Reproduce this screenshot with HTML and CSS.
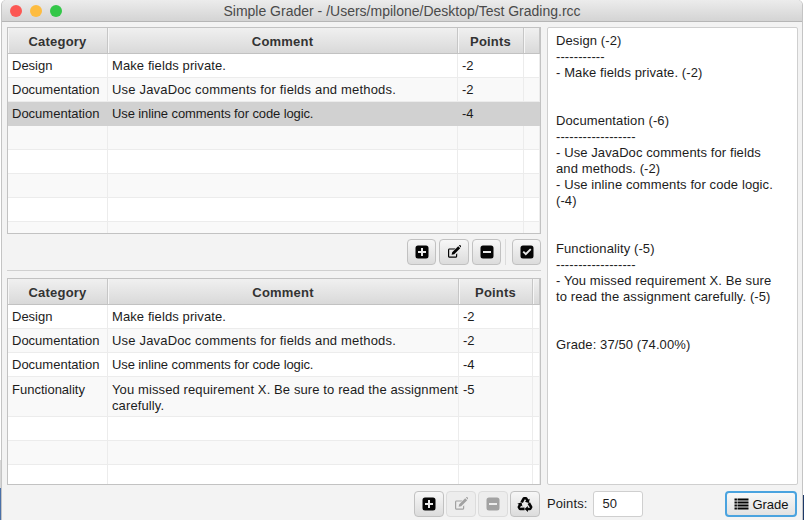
FILE: index.html
```html
<!DOCTYPE html>
<html lang="en">
<head>
<meta charset="utf-8">
<title>Simple Grader</title>
<link rel="stylesheet" href="styles.css">
</head>
<body>
<svg class="defs" width="0" height="0" aria-hidden="true">
  <defs>
    <symbol id="i-plus" viewBox="0 0 14 14"><path fill-rule="evenodd" d="M3 0.5h8a2.5 2.5 0 0 1 2.5 2.5v8a2.5 2.5 0 0 1-2.5 2.5H3A2.5 2.5 0 0 1 .5 11V3A2.5 2.5 0 0 1 3 .5zM6 3v3H3v2h3v3h2V8h3V6H8V3z"/></symbol>
    <symbol id="i-minus" viewBox="0 0 14 14"><path fill-rule="evenodd" d="M3 0.5h8a2.5 2.5 0 0 1 2.5 2.5v8a2.5 2.5 0 0 1-2.5 2.5H3A2.5 2.5 0 0 1 .5 11V3A2.5 2.5 0 0 1 3 .5zM3 6v2h8V6z"/></symbol>
    <symbol id="i-check" viewBox="0 0 14 14"><path fill-rule="evenodd" d="M3 0.5h8a2.5 2.5 0 0 1 2.5 2.5v8a2.5 2.5 0 0 1-2.5 2.5H3A2.5 2.5 0 0 1 .5 11V3A2.5 2.5 0 0 1 3 .5zM2.6 7.2l3.2 3.2 5.6-5.6-1.3-1.3-4.3 4.3-1.9-1.9z"/></symbol>
    <symbol id="i-edit" viewBox="0 0 14 14"><path d="M10.2 8.2v3.1c0 .9-.6 1.5-1.5 1.5H2.5c-.9 0-1.5-.6-1.5-1.5V4.9c0-.9.6-1.5 1.5-1.5h6l-1.2 1.2H2.6c-.3 0-.4.1-.4.4v6.2c0 .3.1.4.4.4h6c.3 0 .4-.1.4-.4V9.4z"/><path d="M11.2 1.2l2 2-6 6-2.6.6.6-2.6zM11.9.5l.7-.4c.2-.1.4-.1.6 0l1 1c.1.2.1.4 0 .6l-.4.7z"/></symbol>
    <symbol id="i-recycle" viewBox="0 0 16 16">
      <path id="rc-arm" d="M3.4 5.7 5.7 1.8Q6.2 1 7 1H9Q9.8 1 10.3 1.8L11.3 3.5 12.7 2.7 11.9 7 7.7 5.7 9.1 4.9 8 3 5.9 7Z"/>
      <use href="#rc-arm" transform="rotate(120 8 8.8)"/>
      <use href="#rc-arm" transform="rotate(240 8 8.8)"/>
    </symbol>
    <symbol id="i-list" viewBox="0 0 14 12"><path d="M0 .5h2.4v2H0zM3 .5h11v2H3zM0 3.5h2.4v2H0zM3 3.5h11v2H3zM0 6.5h2.4v2H0zM3 6.5h11v2H3zM0 9.5h2.4v2H0zM3 9.5h11v2H3z"/></symbol>
  </defs>
</svg>
<div class="window">
  <header class="titlebar">
    <div class="lights"><span class="light red"></span><span class="light yellow"></span><span class="light green"></span></div>
    <div class="title">Simple Grader - /Users/mpilone/Desktop/Test Grading.rcc</div>
  </header>
  <div class="content">
    <main class="left">
      <section class="table table-a">
        <div class="row head"><div class="th">Category</div><div class="th">Comment</div><div class="th">Points</div><div class="th"></div></div>
        <div class="row"><div>Design</div><div class="tight">Make fields private.</div><div>-2</div><div></div></div>
        <div class="row alt"><div>Documentation</div><div class="wide">Use JavaDoc comments for fields and methods.</div><div>-2</div><div></div></div>
        <div class="row selected"><div>Documentation</div><div class="narrow">Use inline comments for code logic.</div><div>-4</div><div></div></div>
        <div class="row alt"><div></div><div></div><div></div><div></div></div>
        <div class="row"><div></div><div></div><div></div><div></div></div>
        <div class="row alt"><div></div><div></div><div></div><div></div></div>
        <div class="row"><div></div><div></div><div></div><div></div></div>
        <div class="row alt"><div></div><div></div><div></div><div></div></div>
      </section>
      <div class="toolbar">
        <button class="btn w29"><svg class="ic"><use href="#i-plus"/></svg></button>
        <button class="btn w30"><svg class="ic"><use href="#i-edit"/></svg></button>
        <button class="btn w29"><svg class="ic"><use href="#i-minus"/></svg></button>
        <span class="vsep"></span>
        <button class="btn w29"><svg class="ic"><use href="#i-check"/></svg></button>
      </div>
      <hr class="divider">
      <section class="table table-b">
        <div class="row head"><div class="th">Category</div><div class="th">Comment</div><div class="th">Points</div><div class="th"></div></div>
        <div class="row"><div>Design</div><div class="tight">Make fields private.</div><div>-2</div><div></div></div>
        <div class="row alt"><div>Documentation</div><div class="wide">Use JavaDoc comments for fields and methods.</div><div>-2</div><div></div></div>
        <div class="row"><div>Documentation</div><div class="narrow">Use inline comments for code logic.</div><div>-4</div><div></div></div>
        <div class="row alt tall"><div>Functionality</div><div class="mid">You missed requirement X. Be sure to read the assignment<br>carefully.</div><div>-5</div><div></div></div>
        <div class="row"><div></div><div></div><div></div><div></div></div>
        <div class="row alt"><div></div><div></div><div></div><div></div></div>
        <div class="row"><div></div><div></div><div></div><div></div></div>
      </section>
    </main>
    <aside class="report">Design (-2)
-----------
- Make fields private. (-2)


Documentation (-6)
------------------
- Use JavaDoc comments for fields and methods. (-2)
- Use inline comments for code logic. (-4)


Functionality (-5)
------------------
- You missed requirement X. Be sure to read the assignment carefully. (-5)


Grade: 37/50 (74.00%)</aside>
  </div>
  <footer class="bottom">
    <button class="btn w30"><svg class="ic"><use href="#i-plus"/></svg></button>
    <button class="btn w30 off"><svg class="ic"><use href="#i-edit"/></svg></button>
    <button class="btn w30 off"><svg class="ic"><use href="#i-minus"/></svg></button>
    <button class="btn w30"><svg class="ic big"><use href="#i-recycle"/></svg></button>
    <label class="points">Points:</label>
    <div class="input">50</div>
    <button class="btn grade"><svg class="ic list"><use href="#i-list"/></svg>Grade</button>
  </footer>
</div>
</body>
</html>
```

FILE: styles.css
```css
* { box-sizing: border-box; }
html, body { margin: 0; height: 100%; }
body {
  width: 804px;
  height: 520px;
  overflow: hidden;
  background:
    linear-gradient(#ffffff 460px, #d6d6d6 460px, #d6d6d6 488px, #4a70a8 488px) left / 2px 100% no-repeat,
    linear-gradient(#ffffff 495px, #1c3868 495px) right / 2px 100% no-repeat,
    #fff;
  font-family: "Liberation Sans", Arial, sans-serif;
  font-size: 13px;
  color: #1c1c1c;
}
.defs { position: absolute; }
.window {
  margin-left: 2px;
  width: 800px;
  height: 520px;
  background: #f3f3f3;
  border-radius: 5px 5px 0 0;
  box-shadow: -1px 0 0 #c4c4c4, 1px 0 0 #c4c4c4;
  display: flex;
  flex-direction: column;
}
.titlebar {
  position: relative;
  height: 22px;
  flex: none;
  display: flex;
  justify-content: center;
  align-items: center;
  padding-top: 1px;
  background: linear-gradient(#ececec, #d4d4d4);
  border-bottom: 1px solid #b6b6b6;
  border-radius: 5px 5px 0 0;
}
.lights {
  position: absolute;
  left: 8px;
  top: 5px;
  display: flex;
  gap: 8px;
}
.light { width: 12px; height: 12px; border-radius: 50%; }
.red { background: #fc5753; }
.yellow { background: #fdbc40; }
.green { background: #33c748; }
.title { color: #4a4a4a; font-size: 14px; }
.content {
  flex: none;
  height: 458px;
  margin-top: 5px;
  padding-left: 5px;
  display: flex;
  gap: 6px;
}
.left { width: 534px; display: flex; flex-direction: column; }
.table {
  flex: none;
  height: 207px;
  overflow: hidden;
  background: #fff;
  border: 1px solid #c2c2c2;
}
.row {
  display: grid;
  height: 24px;
  align-items: stretch;
  line-height: 23px;
  border-bottom: 1px solid #ececec;
  background: #fff;
}
.table-a .row { grid-template-columns: 100px 350px 66px 1fr; }
.table-b .row { grid-template-columns: 100px 351px 74px 1fr; }
.row > div { padding-left: 4px; border-right: 1px solid #ececec; white-space: nowrap; overflow: hidden; }
.row > .wide { letter-spacing: 0.18px; }
.row > .mid { letter-spacing: 0.11px; overflow: visible; }
.row > .narrow { letter-spacing: -0.11px; }
.row > .tight { letter-spacing: 0.1px; }
.row.alt { background: #f9f9f9; }
.row.selected { background: #d1d1d1; border-bottom-color: #d1d1d1; }
.row.selected > div { border-right-color: #d1d1d1; }
.row.tall { height: 40px; line-height: 16px; }
.row.tall > div { padding-top: 5px; }
.row.head {
  height: 26px;
  line-height: 24px;
  background: linear-gradient(#f0f0f0, #d9d9d9);
  border-bottom: 1px solid #c2c2c2;
}
.row.head > .th {
  padding: 2px 0 0;
  text-align: center;
  font-weight: 700;
  letter-spacing: 0.2px;
  color: #333;
  border-right: 1px solid #c6c6c6;
  box-shadow: inset 1px 0 0 #f6f6f6;
}
.toolbar {
  flex: none;
  height: 36px;
  padding-top: 5px;
  display: flex;
  justify-content: flex-end;
  align-items: flex-start;
  gap: 3px;
}
.btn {
  height: 26px;
  padding: 0;
  display: flex;
  align-items: center;
  justify-content: center;
  background: linear-gradient(#f7f7f7, #dcdcdc);
  border: 1px solid #c1c1c1;
  border-radius: 4px;
  font: inherit;
  color: #111;
}
.w29 { width: 29px; }
.w30 { width: 30px; }
.ic { width: 14px; height: 14px; fill: #050505; }
.ic.big { width: 16px; height: 16px; }
.ic.list { width: 15px; height: 12px; margin-right: 3px; }
.btn.off { background: #ededed; border-color: #dcdcdc; }
.btn.off .ic { fill: #a2a2a2; }
.vsep { width: 1px; height: 26px; margin: 0 3px 0 1px; background: #dcdcdc; }
.divider {
  flex: none;
  width: 100%;
  height: 1px;
  margin: 0 0 7px;
  border: 0;
  background: #d0d0d0;
}
.report {
  width: 251px;
  height: 458px;
  padding: 5px 16px 5px 8px;
  white-space: pre-wrap;
  line-height: 16px;
  letter-spacing: 0.1px;
  background: #fff;
  border: 1px solid #cfcfcf;
  border-radius: 2px;
}
.bottom {
  flex: none;
  display: flex;
  align-items: flex-start;
  padding: 6px 0 0 412px;
  height: 35px;
}
.bottom .btn { margin-right: 2px; }
.points { margin-left: 5px; line-height: 26px; letter-spacing: 0.1px; }
.input {
  width: 50px;
  height: 26px;
  margin-left: 6px;
  padding-left: 8px;
  line-height: 24px;
  background: #fff;
  border: 1px solid #cfcfcf;
  border-radius: 3px;
}
.btn.grade {
  width: 72px;
  margin: 0 0 0 82px;
  background: linear-gradient(#f8f8f8, #e2e2e2);
  border: 2px solid #4aa3df;
  border-radius: 4px;
}
```
